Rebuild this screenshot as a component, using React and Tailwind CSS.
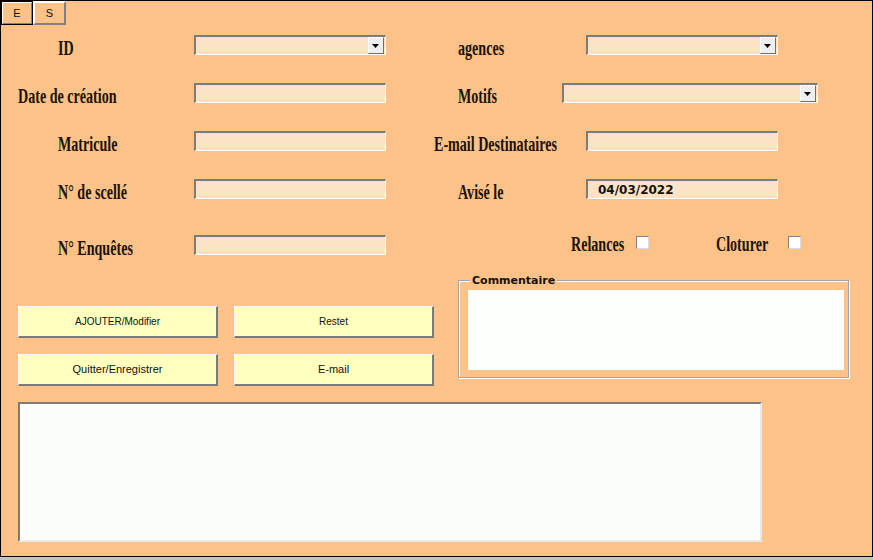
import React from 'react'

const serif = "font-['Liberation_Serif',serif]"
const sans = "font-['Liberation_Sans',Arial,sans-serif]"
const boxCls =
  'h-[20px] shrink-0 bg-[#fce3c6] border-t-2 border-l-2 border-b border-r border-t-[#7b7b7b] border-l-[#7b7b7b] border-b-white border-r-white'

function Label({ children, up }) {
  return (
    <span
      className={`inline-block origin-left scale-x-[0.64] whitespace-nowrap text-[22px] font-bold leading-[20px] text-[#1a1208] ${serif} ${
        up ? '-translate-y-[2px]' : 'translate-y-[2px]'
      }`}
    >
      {children}
    </span>
  )
}

function Cell({ w, pl, children }) {
  return (
    <div className={`shrink-0 ${w} ${pl}`}>
      <Label>{children}</Label>
    </div>
  )
}

function Input({ w, children }) {
  return <div className={`${boxCls} ${w} flex items-center`}>{children}</div>
}

function Combo({ w }) {
  return (
    <div className={`${boxCls} ${w} flex items-start justify-end pr-[1px]`}>
      <div className="flex h-[17px] w-[16px] items-center justify-center border border-t-white border-l-white border-b-[#6e6e6e] border-r-[#6e6e6e] bg-[#eeeeee]">
        <svg width="8" height="4" viewBox="0 0 8 4">
          <path d="M0 0H7L3.5 4Z" fill="#000" />
        </svg>
      </div>
    </div>
  )
}

function Check() {
  return (
    <div className="mt-[1px] h-[13px] w-[13px] shrink-0 border border-t-[#808080] border-l-[#808080] border-b-[#dcdcdc] border-r-[#dcdcdc] bg-white" />
  )
}

function Button({ children, size }) {
  return (
    <button
      className={`h-[32px] w-[200px] border border-t-white border-l-white border-b-2 border-r-2 border-b-[#7a7a7a] border-r-[#7a7a7a] bg-[#ffffc0] text-[#111] ${size} ${sans}`}
    >
      {children}
    </button>
  )
}

export default function App() {
  return (
    <div className="h-[560px] w-[873px] bg-[#c4c4c4]">
      <div className="h-[557px] w-[873px] border border-black bg-[#fdc287]">
        {/* tabs */}
        <div className="flex h-[24px]">
          <div className="flex w-[32px] items-center justify-center border border-black">
            <div className={`flex h-full w-full items-center justify-center border border-t-white border-l-white border-b-[#808080] border-r-[#808080] text-[11px] text-[#111] ${sans}`}>
              E
            </div>
          </div>
          <div className={`flex w-[33px] items-center justify-center border-2 border-t-white border-l-white border-b-[#808080] border-r-[#808080] text-[11px] text-[#111] ${sans}`}>
            S
          </div>
        </div>

        {/* row 1 */}
        <div className="mt-[10px] flex h-[20px]">
          <Cell w="w-[193px]" pl="pl-[57px]">ID</Cell>
          <Combo w="w-[192px]" />
          <Cell w="w-[200px]" pl="pl-[72px]">agences</Cell>
          <Combo w="w-[192px]" />
        </div>

        {/* row 2 */}
        <div className="mt-[28px] flex h-[20px]">
          <Cell w="w-[193px]" pl="pl-[17px]">Date de création</Cell>
          <Input w="w-[192px]" />
          <Cell w="w-[176px]" pl="pl-[72px]">Motifs</Cell>
          <Combo w="w-[256px]" />
        </div>

        {/* row 3 */}
        <div className="mt-[28px] flex h-[20px]">
          <Cell w="w-[193px]" pl="pl-[57px]">Matricule</Cell>
          <Input w="w-[192px]" />
          <Cell w="w-[200px]" pl="pl-[48px]">E-mail Destinataires</Cell>
          <Input w="w-[192px]" />
        </div>

        {/* row 4 */}
        <div className="mt-[28px] flex h-[20px]">
          <Cell w="w-[193px]" pl="pl-[57px]">N° de scellé</Cell>
          <Input w="w-[192px]" />
          <Cell w="w-[200px]" pl="pl-[72px]">Avisé le</Cell>
          <Input w="w-[192px]">
            <span className="pl-[10px] font-['DejaVu_Sans',Verdana,sans-serif] text-[12px] font-bold leading-none text-[#111]">
              04/03/2022
            </span>
          </Input>
        </div>

        {/* row 5 */}
        <div className="mt-[36px] flex h-[20px] items-start">
          <Cell w="w-[193px]" pl="pl-[57px]">N° Enquêtes</Cell>
          <Input w="w-[192px]" />
          <div className="w-[185px] shrink-0" />
          <div className="w-[65px] shrink-0">
            <Label up>Relances</Label>
          </div>
          <Check />
          <div className="w-[67px] shrink-0" />
          <div className="w-[72px] shrink-0">
            <Label up>Cloturer</Label>
          </div>
          <Check />
        </div>

        {/* buttons + commentaire */}
        <div className="mt-[25px] flex items-start">
          <div className="ml-[17px] grid w-[416px] shrink-0 grid-cols-[200px_200px] gap-x-[16px] gap-y-[16px] pt-[26px]">
            <Button size="text-[10px]">AJOUTER/Modifier</Button>
            <Button size="text-[10px]">Restet</Button>
            <Button size="text-[11px]">Quitter/Enregistrer</Button>
            <Button size="text-[11px]">E-mail</Button>
          </div>
          <div className="relative ml-[24px] h-[98px] w-[391px] shrink-0 border border-[#a4a4a4] shadow-[inset_1px_1px_0_#fff,1px_1px_0_#fff]">
            <span className="absolute -top-[6px] left-[11px] bg-[#fdc287] px-[2px] font-['DejaVu_Sans',Verdana,sans-serif] text-[11px] font-bold leading-[11px] text-[#111]">
              Commentaire
            </span>
            <textarea className="ml-[9px] mt-[9px] block h-[80px] w-[376px] resize-none bg-[#fdfffb] outline-none" />
          </div>
        </div>

        {/* big list */}
        <textarea className="ml-[17px] mt-[16px] block h-[140px] w-[744px] resize-none border-t-2 border-l-2 border-b-2 border-r-2 border-t-[#7b7b7b] border-l-[#7b7b7b] border-b-[#e8e8e8] border-r-[#e8e8e8] bg-[#fbfdf9] outline-none" />
      </div>
    </div>
  )
}
